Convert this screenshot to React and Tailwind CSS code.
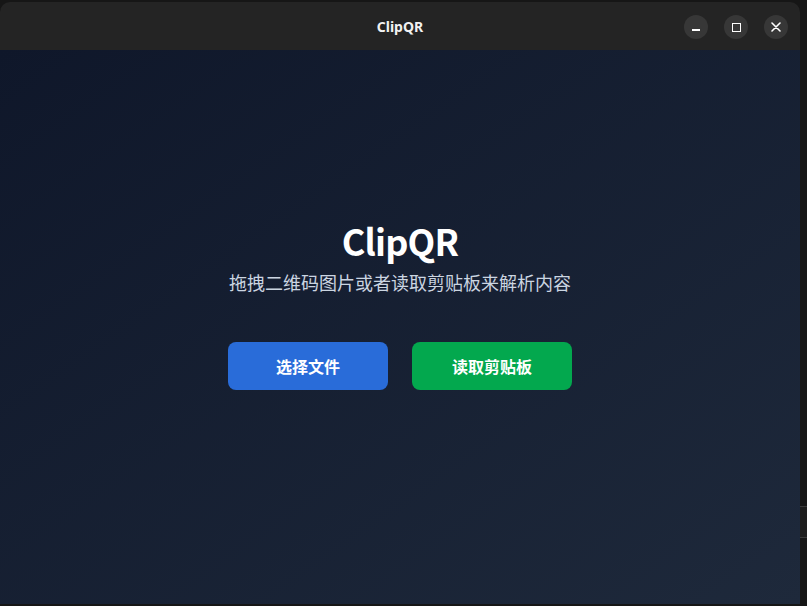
export default function App() {
  return (
    <div className="w-[807px] h-[606px] bg-[#161616] flex overflow-hidden" style={{ fontFamily: '"Noto Sans", "Noto Sans CJK SC", sans-serif' }}>
      {/* app window */}
      <div className="w-[800px] h-[602px] mt-[2px] rounded-t-[10px] overflow-hidden flex flex-col">
        {/* title bar */}
        <div className="h-[48px] bg-[#242424] flex items-center px-[12px]">
          <div className="w-[120px]" />
          <div className="flex-1 text-center text-[14px] font-bold text-[#f2f2f2] pt-[1px]">ClipQR</div>
          <div className="w-[120px] flex items-center justify-end gap-[16px] pt-[2px]">
            <button className="w-[24px] h-[24px] rounded-full bg-[#373737] flex items-center justify-center">
              <div className="w-[8px] h-[1.5px] bg-white mt-[6px]" />
            </button>
            <button className="w-[24px] h-[24px] rounded-full bg-[#373737] flex items-center justify-center">
              <div className="w-[9px] h-[9px] border-[1.5px] border-white" />
            </button>
            <button className="w-[24px] h-[24px] rounded-full bg-[#373737] flex items-center justify-center">
              <svg width="10" height="10" viewBox="0 0 10 10">
                <path d="M1 1 L9 9 M9 1 L1 9" stroke="white" strokeWidth="1.6" strokeLinecap="round" />
              </svg>
            </button>
          </div>
        </div>

        {/* content */}
        <div className="flex-1 bg-gradient-to-br from-[#0f172a] to-[#1e293b] flex flex-col items-center pt-[170px]" style={{ fontFamily: '"Noto Sans CJK SC", sans-serif' }}>
          <h1 className="text-[36px] leading-[40px] font-bold text-white tracking-[-0.8px]">ClipQR</h1>
          <p className="mt-[8px] text-[18px] leading-[28px] text-[#cbd5e1]">拖拽二维码图片或者读取剪贴板来解析内容</p>
          <div className="mt-[46px] flex gap-[24px]">
            <button className="w-[160px] h-[48px] rounded-[8px] bg-[#296cd9] text-white text-[16px] font-bold">选择文件</button>
            <button className="w-[160px] h-[48px] rounded-[8px] bg-[#03a84e] text-white text-[16px] font-bold">读取剪贴板</button>
          </div>
        </div>
      </div>

      {/* strip of the window behind */}
      <div className="flex-1 flex flex-col">
        <div className="h-[506px]" />
        <div className="h-[32px] border-t border-[#3a3a3a] border-b bg-[#1d1d1d]" />
      </div>
    </div>
  );
}
